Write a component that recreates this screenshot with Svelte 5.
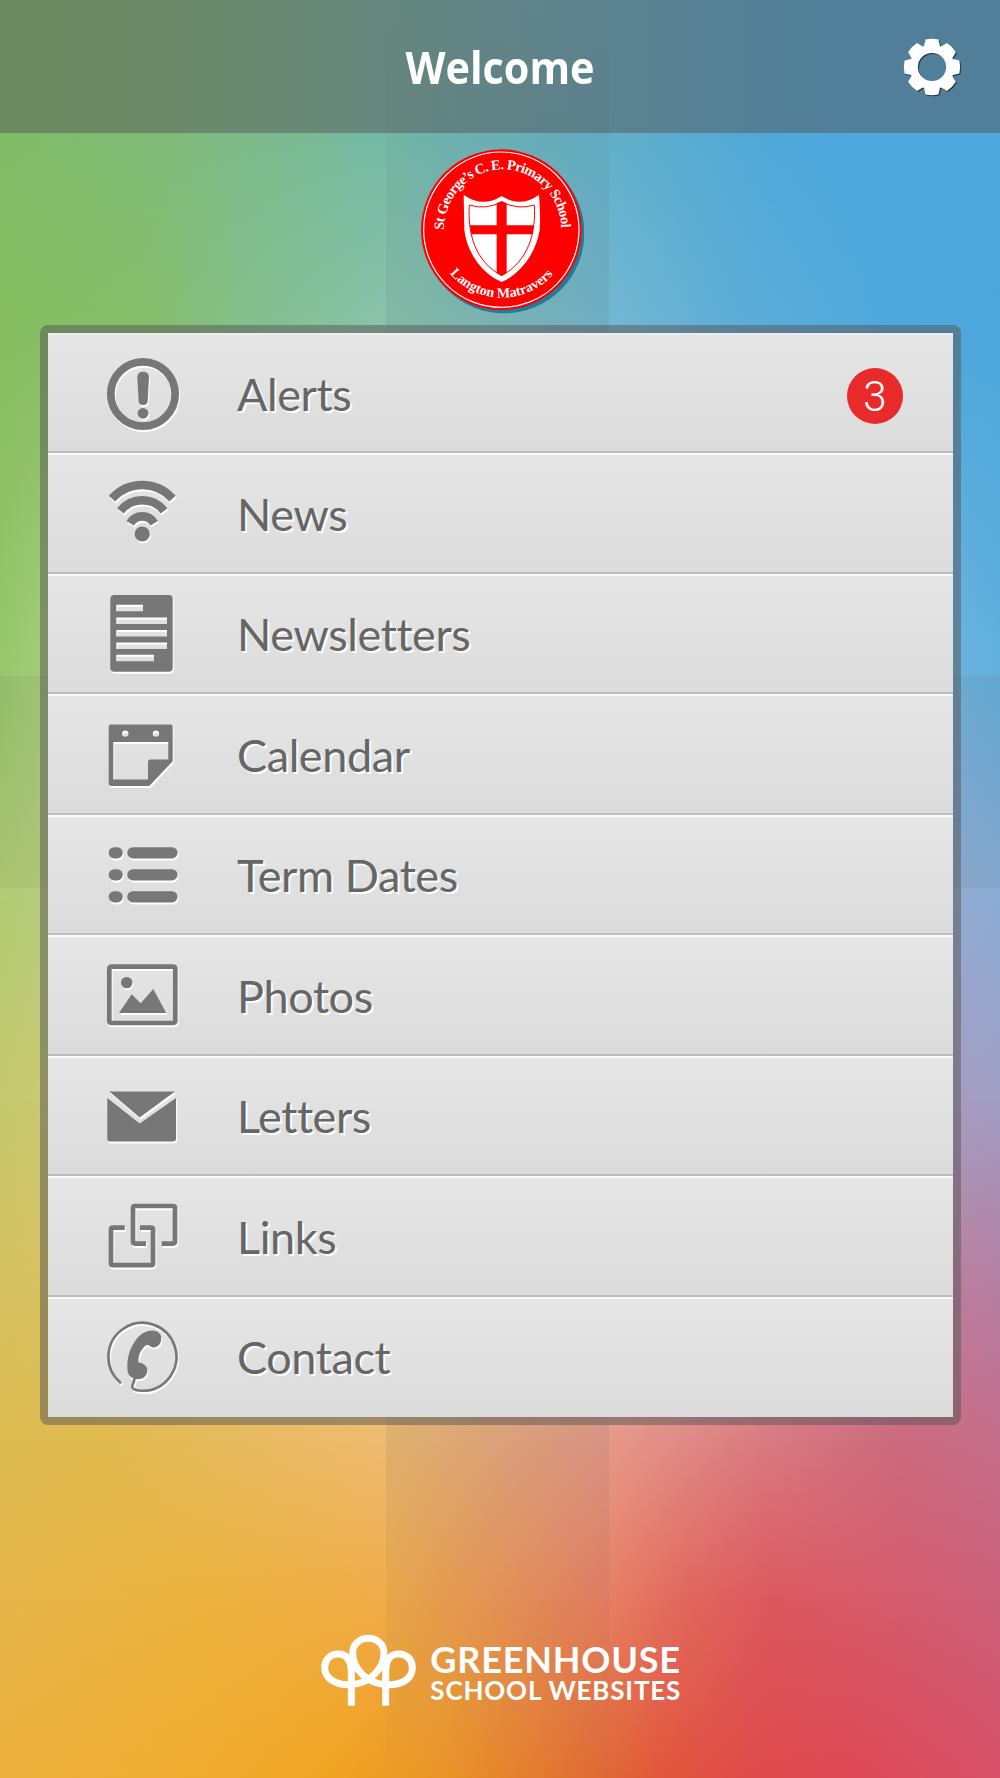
<script>
  const school = { top: "St George’s C. E. Primary School", bottom: "Langton Matravers" };

  const items = [
    { icon: "alert", label: "Alerts", count: 3 },
    { icon: "wifi", label: "News" },
    { icon: "page", label: "Newsletters" },
    { icon: "calendar", label: "Calendar" },
    { icon: "list", label: "Term Dates" },
    { icon: "photo", label: "Photos" },
    { icon: "letter", label: "Letters" },
    { icon: "links", label: "Links" },
    { icon: "phone", label: "Contact" },
  ];

  // Backdrop: horizontal gradients, each one fading in down to its own y
  const bands = [
    { y: 133, stops: "#82bc69 0, #81bc6f 90px, #7fbb80 200px, #75b9a6 385px, #6fb6b3 450px, #62b0c9 610px, #59acd1 690px, #4fa8da 780px, #4da7dc 850px, #4da7dc" },
    { y: 325, stops: "#85bd5f 0, #86bd6b 150px, #84bf8c 250px, #89c3aa 385px, #73b7d1 610px, #5dadd7 740px, #4fa8db 880px, #4ba7db" },
    { y: 660, stops: "#96c66b 0, #a5cd7c 50px, #c0d8b0 400px, #a0c8d8 700px, #6ab3de 950px, #62b0dd" },
    { y: 900, stops: "#b2cc72 0, #b8cc7c 50px, #d8d0a0 400px, #c0b8c8 700px, #93abd2 950px, #8bacd4" },
    { y: 1100, stops: "#c4c86e 0, #cbc972 50px, #e0cc90 400px, #cca8b0 700px, #a79cc0 950px, #a19ec3" },
    { y: 1300, stops: "#d6c160 0, #d9c05e 50px, #edc684 400px, #e0a49c 700px, #be7c9a 950px, #b57d9f" },
    { y: 1440, stops: "#ddbc52 0, #e0ba4f 100px, #eebb70 385px, #e7998a 610px, #d97b82 760px, #cc6a7e 900px, #c56f8c" },
    { y: 1600, stops: "#e6b64b 0, #ecb33e 200px, #f0ac48 385px, #e77e62 610px, #e0665d 690px, #dc585f 770px, #d65b6b 880px, #cb5f7a" },
    { y: 1778, stops: "#ecb03d 0, #efab30 200px, #f0a321 340px, #ea9426 450px, #e06a33 600px, #e2573a 660px, #de4b4a 750px, #dd4855 850px, #d8526a" },
  ];

  function bandStyle(i) {
    const bg = `background-image: linear-gradient(90deg, ${bands[i].stops})`;
    if (i === 0) return bg;
    return `${bg}; mask-image: linear-gradient(transparent ${bands[i - 1].y}px, #000 ${bands[i].y}px)`;
  }

  const teeth = [0, 45, 90, 135, 180, 225, 270, 315];
</script>

<div class="screen">
  <div class="backdrop">
    {#each bands as band, i (band.y)}
      <div class="band" style={bandStyle(i)}></div>
    {/each}
    <div class="bar-v"></div>
    <div class="bar-h"></div>
  </div>

  <div class="content">
    <header>
      <span></span>
      <h1>Welcome</h1>
      <svg class="gear" width="64" height="64" viewBox="-32 -32 64 64">
        <circle r="18.2" fill="none" stroke="#fff" stroke-width="8.2" />
        {#each teeth as angle (angle)}
          <path transform="rotate({angle})" d="M-8.2-20 -6.4-27.4Q0-29 6.4-27.4L8.2-20Z" fill="#fff" />
        {/each}
      </svg>
    </header>

    <div class="crest">
      <svg width="165" height="168" viewBox="55 50 495 504">
        <defs>
          <path id="arc-top" d="M130 299A175 181 0 0 1 482 299" />
          <path id="arc-bottom" d="M148 429A203 203 0 0 0 460 429" />
        </defs>
        <circle cx="310" cy="308" r="241" fill="#1f7d9a" />
        <circle cx="302" cy="298" r="241" fill="#f00" />
        <circle cx="302" cy="298" r="233" fill="none" stroke="#fff" stroke-width="3.5" />
        <text class="crest-text" font-size="43"><textPath href="#arc-top" textLength="556">{school.top}</textPath></text>
        <text class="crest-text" font-size="42"><textPath href="#arc-bottom" textLength="352">{school.bottom}</textPath></text>
        <path d="M189 193Q245 234 303 197 360 234 415 193 420 250 417 300C405 370 360 430 303 455 245 430 200 370 191 300 186 250 189 193Z" fill="#fff" />
        <path d="M206 224Q255 240 303 214 352 240 401 224C406 310 383 392 303 436 222 392 201 310 206 224Z" fill="none" stroke="#f00" stroke-width="3" />
        <path d="M288 220 303 213 318 220V428L303 436 288 428ZM208 285H399L396 312H212Z" fill="#f00" />
      </svg>
    </div>

    <nav class="menu">
      {#each items as item (item.icon)}
        <div class="row">
          <svg class="icon" width="80" height="80" viewBox="0 0 80 80">
            {#if item.icon === "alert"}
              <circle cx="43" cy="41" r="32.2" class="line" stroke-width="7.7" />
              <path d="M37.3 24.5Q37.3 18.7 43.1 18.7T49 24.5L47.6 48.5Q47 52 43.1 52T38.7 48.5Z" />
              <circle cx="43" cy="60.3" r="5.4" />
            {:else if item.icon === "wifi"}
              <path class="line" stroke-width="8.6" d="M12 25.6A40.3 40.3 0 0 1 72.5 25.6M20.5 37.8A27.7 27.7 0 0 1 64 37.8M30.2 50.2A14 14 0 0 1 54.2 50.2" />
              <circle cx="42.2" cy="61" r="7.6" />
            {:else if item.icon === "page"}
              <path fill-rule="evenodd" d="M14.3 1H68.7Q72.7 1 72.7 5V73.8Q72.7 77.8 68.7 77.8H14.3Q10.3 77.8 10.3 73.8V5Q10.3 1 14.3 1ZM16.3 10.8V17.3H43V10.8ZM16.3 23.4V29.9H67V23.4ZM16.3 36V42.5H67V36ZM16.3 48.4V54.9H67V48.4ZM16.3 60.8V67.3H54V60.8Z" />
            {:else if item.icon === "calendar"}
              <path fill-rule="evenodd" d="M11 10.6H70.4Q72.7 10.6 72.7 13V47.3L49.3 72H11Q8.7 72 8.7 69.6V13Q8.7 10.6 11 10.6ZM13.3 28V65.6H48V48Q48 45.6 50.4 45.6H68.3V28ZM22.1 19.6a3.2 3.2 0 1 0 6.4 0 3.2 3.2 0 1 0-6.4 0ZM52.8 19.6a3.2 3.2 0 1 0 6.4 0 3.2 3.2 0 1 0-6.4 0Z" />
            {:else if item.icon === "list"}
              {#each [12.2, 34.2, 56.2] as y (y)}
                <rect x="8.7" {y} width="14" height="11.3" rx="5.6" />
                <rect x="27.3" {y} width="50.2" height="11.3" rx="5.6" />
              {/each}
            {:else if item.icon === "photo"}
              <rect x="9.3" y="11.6" width="66" height="56.4" rx="2" class="line" stroke-width="4.7" />
              <circle cx="26.7" cy="27.6" r="5.7" />
              <path d="M19 58 31.7 39.3 40.7 48.3 53.3 34 66.3 58Z" />
            {:else if item.icon === "letter"}
              <path d="M9.3 15.4H75L39.7 41.4ZM7.3 22 39.7 47.4 76 22V62.4Q76 65.4 73 65.4H10.3Q7.3 65.4 7.3 62.4Z" />
            {:else if item.icon === "links"}
              <path class="line" stroke-width="4.7" d="M46 47.6H35Q33 47.6 33 45.6V12Q33 10 35 10H73Q75 10 75 12V45.6Q75 47.6 73 47.6H61.7M24.7 31.6H13Q11 31.6 11 33.6V67.2Q11 69.2 13 69.2H51Q53 69.2 53 67.2V33.6Q53 31.6 51 31.6H40" />
            {:else}
              <path class="line" stroke-width="2.6" d="M21 66.2A34 34 0 1 1 43 73.8C37 73.8 32.2 73 32.2 69.6 32.2 67 34.5 65.5 34.6 61" />
              <path d="M48.3 13.9Q53 12.6 57.2 14.6 61 17 61.3 20.5 61.5 25 59 28 55 32 50.5 29.4 47.5 27 45.3 28.7C40.5 33 38.2 38 38.5 45.4 43 45.6 45.6 48.3 47 51 48.4 56 45.5 60 42 61.6 37 63.2 32.5 62 29.6 58.8 27.3 56 27.2 51 27.4 46.5 28 38 30 32.5 33.5 26.5 38 19 42 15.6 48.3 13.9Z" />
            {/if}
          </svg>
          <span class="label">{item.label}</span>
          {#if item.count}
            <span class="badge">{item.count}</span>
          {/if}
        </div>
      {/each}
    </nav>

    <footer>
      <svg width="362" height="75" viewBox="60 70 1086 225">
        <path
          d="M154 288V190C154 150 140 133 115 133 90 133 74 150 74 174 74 205 105 225 145 225 215 225 252 170 252 130 252 105 232 86 205 86 178 86 158 105 158 130 158 170 195 225 265 225 310 225 337 205 337 174 337 150 320 133 296 133 270 133 257 150 257 190V288"
          fill="none"
          stroke="#fff"
          stroke-width="21"
        />
        <text x="391" y="190" font-size="108" textLength="749" class="brand">GREENHOUSE</text>
        <text x="391" y="272" font-size="78" textLength="750" class="brand">SCHOOL WEBSITES</text>
      </svg>
    </footer>
  </div>
</div>

<style>
  :global(body) {
    margin: 0;
  }

  .screen {
    display: grid;
    width: 1000px;
    height: 1778px;
    overflow: hidden;
    font-family: Lato, sans-serif;
  }

  .backdrop,
  .content {
    grid-area: 1 / 1;
  }

  .backdrop {
    display: grid;
    grid-template: 676px 212px 1fr / 386px 223px 1fr;
  }

  .band {
    grid-area: 1 / 1 / 4 / 4;
  }

  /* Darker cross that runs behind the menu */
  .bar-v,
  .bar-h {
    z-index: 1;
    background: rgba(85, 85, 85, 0.08);
  }

  .bar-v {
    grid-area: 1 / 2 / 4 / 3;
    background: linear-gradient(rgba(85, 85, 85, 0.01), rgba(85, 85, 85, 0.1) 300px, rgba(85, 85, 85, 0.1) 1450px, rgba(85, 85, 85, 0.01));
  }

  .bar-h {
    grid-area: 2 / 1 / 3 / 4;
  }

  .content {
    display: flex;
    flex-direction: column;
    z-index: 2;
  }

  header {
    display: grid;
    grid-template-columns: 100px 1fr 100px;
    align-items: center;
    height: 133px;
    background: rgba(85, 85, 85, 0.5);
  }

  h1 {
    margin: 0;
    font-family: "Open Sans", sans-serif;
    font-size: 45px;
    font-weight: 700;
    line-height: 60px;
    text-align: center;
    color: #fff;
    transform: scaleX(0.92);
  }

  .gear {
    filter: drop-shadow(1px 1.5px 0.7px rgba(0, 0, 0, 0.6));
  }

  .crest {
    display: flex;
    justify-content: center;
    height: 178px;
    padding: 14px 0 0 2px;
  }

  .crest-text {
    font-family: "Liberation Serif", serif;
    font-weight: 700;
    fill: #fff;
  }

  .menu {
    width: 905px;
    margin-left: 40px;
    border: 8px solid rgba(85, 85, 85, 0.5);
    border-radius: 8px;
    background-clip: padding-box;
  }

  .row {
    display: flex;
    align-items: center;
    box-sizing: border-box;
    height: 120.5px;
    padding: 0 50px 0 52px;
    border-top: 2px solid #f9f9f9;
    border-bottom: 2px solid #bcbcbc;
    background: linear-gradient(#e6e6e6, #dbdbdb);
  }

  .row:first-child {
    height: 120px;
    border-top-color: #ececec;
  }

  .row:last-child {
    border-bottom-color: #d8dcdd;
  }

  .icon {
    fill: #777;
    filter: drop-shadow(1.5px 2px 0.5px #fff);
  }

  .line {
    fill: none;
    stroke: #777;
  }

  .label {
    flex: 1;
    padding: 1px 0 0 57px;
    font-size: 45px;
    letter-spacing: -0.4px;
    line-height: 56px;
    color: #666;
    text-shadow: 2px 2px 1px #fff;
    font-variant-ligatures: none;
  }

  .badge {
    width: 56px;
    height: 56px;
    margin-top: 6px;
    border-radius: 50%;
    background: #e82a2a;
    color: #fff;
    font-family: Roboto, sans-serif;
    font-size: 42px;
    font-weight: 300;
    line-height: 57px;
    text-align: center;
  }

  footer {
    display: flex;
    justify-content: center;
    margin-top: 208px;
    padding-left: 2px;
  }

  .brand {
    font-weight: 700;
    fill: #fff;
  }
</style>
